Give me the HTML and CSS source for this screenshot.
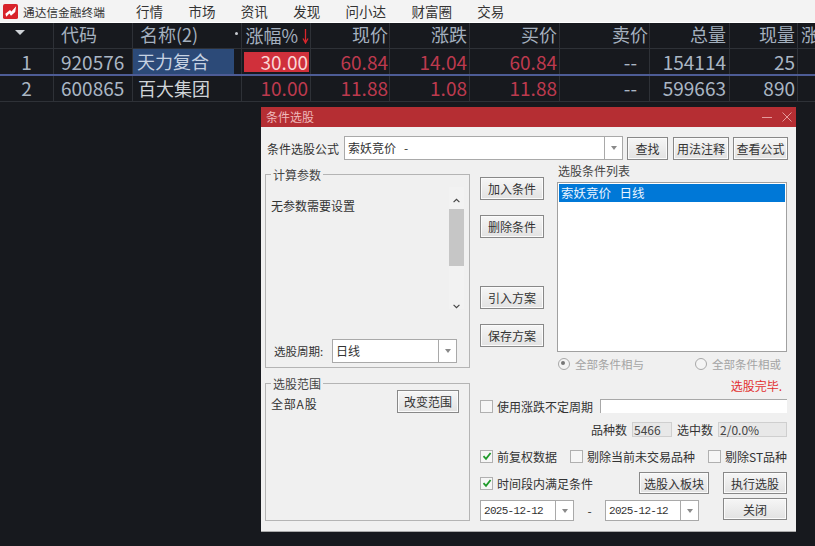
FILE: index.html
```html
<!DOCTYPE html>
<html lang="zh-CN">
<head>
<meta charset="utf-8">
<title>通达信金融终端</title>
<link rel="stylesheet" href="styles.css">
</head>
<body>
<header class="menubar">
  <svg class="logo" viewBox="0 0 16 16" width="15" height="15"><rect width="16" height="16" rx="2" fill="#d8232a"/><path d="M2.5 10.5 L7.5 6.5 L9 8 L14 2.5 L13 8.5 L8.5 12.5 L6.8 10 L3.5 13.5 Z" fill="#fff"/></svg>
  <span class="brand">通达信金融终端</span>
  <nav class="menu"><span>行情</span><span>市场</span><span>资讯</span><span>发现</span><span>问小达</span><span>财富圈</span><span>交易</span></nav>
</header>

<div class="grid">
  <div class="row head">
    <div class="c c0"><i class="sort-tri"></i></div>
    <div class="c c1 left">代码</div>
    <div class="c c2 left name-head"><span>名称(2)</span><i class="dot"></i></div>
    <div class="c c3 pct-head"><span>涨幅%</span><svg class="down" viewBox="0 0 7 16" width="7" height="16"><path d="M3.5 1V14M1 10.5L3.5 15L6 10.5" stroke="#d8262c" stroke-width="1.3" fill="none"/></svg></div>
    <div class="c c4">现价</div>
    <div class="c c5">涨跌</div>
    <div class="c c6">买价</div>
    <div class="c c7">卖价</div>
    <div class="c c8">总量</div>
    <div class="c c9">现量</div>
    <div class="c c10 left">涨</div>
  </div>
  <div class="row active">
    <div class="c c0 center">1</div>
    <div class="c c1 left">920576</div>
    <div class="c c2 left"><span class="sel-name">天力复合</span></div>
    <div class="c c3"><span class="limit">30.00</span></div>
    <div class="c c4 red">60.84</div>
    <div class="c c5 red">14.04</div>
    <div class="c c6 red">60.84</div>
    <div class="c c7 dash">--</div>
    <div class="c c8">154114</div>
    <div class="c c9">25</div>
    <div class="c c10"></div>
  </div>
  <div class="row">
    <div class="c c0 center">2</div>
    <div class="c c1 left">600865</div>
    <div class="c c2 left white">百大集团</div>
    <div class="c c3 red">10.00</div>
    <div class="c c4 red">11.88</div>
    <div class="c c5 red">1.08</div>
    <div class="c c6 red">11.88</div>
    <div class="c c7 dash">--</div>
    <div class="c c8">599663</div>
    <div class="c c9">890</div>
    <div class="c c10"></div>
  </div>
</div>

<section class="dialog">
  <div class="titlebar">
    <span>条件选股</span>
    <svg class="winbtns" viewBox="0 0 30 12" width="30" height="12"><path d="M0 6.5H10" stroke="#e59a9c" stroke-width="1"/><path d="M20.5 1.5L29.5 10.5M29.5 1.5L20.5 10.5" stroke="#e59a9c" stroke-width="1" fill="none"/></svg>
  </div>
  <div class="dlg-body">
    <div class="formula-row">
      <label class="formula-label">条件选股公式</label>
      <div class="combo formula-combo"><span class="combo-text">索妖竞价&nbsp;&nbsp;&nbsp;-</span><span class="combo-arrow"><i></i></span></div>
      <button class="btn b-find">查找</button>
      <button class="btn b-usage">用法注释</button>
      <button class="btn b-view">查看公式</button>
    </div>

    <div class="main">
      <div class="left-col">
        <fieldset class="group params">
          <legend>计算参数</legend>
          <div class="param-area">
            <p class="no-param">无参数需要设置</p>
            <div class="scrollbar">
              <svg viewBox="0 0 9 6" width="9" height="6"><path d="M1 5L4.5 1.5L8 5" stroke="#444" stroke-width="1.4" fill="none"/></svg>
              <div class="track"><div class="thumb"></div></div>
              <svg viewBox="0 0 9 6" width="9" height="6"><path d="M1 1L4.5 4.5L8 1" stroke="#444" stroke-width="1.4" fill="none"/></svg>
            </div>
          </div>
          <div class="period">
            <span class="period-label">选股周期:</span>
            <div class="combo period-combo"><span class="combo-text">日线</span><span class="combo-arrow"><i></i></span></div>
          </div>
        </fieldset>
        <fieldset class="group scope">
          <legend>选股范围</legend>
          <div class="scope-row"><span class="scope-text">全部A股</span><button class="btn b-scope">改变范围</button></div>
        </fieldset>
      </div>

      <div class="right-col">
        <div class="upper">
          <div class="mid-btns">
            <button class="btn b-mid">加入条件</button>
            <button class="btn b-mid">删除条件</button>
            <button class="btn b-mid gap-big">引入方案</button>
            <button class="btn b-mid">保存方案</button>
          </div>
          <div class="list-wrap">
            <div class="list-title">选股条件列表</div>
            <div class="listbox"><div class="list-sel">索妖竞价&nbsp;&nbsp;&nbsp;日线</div></div>
          </div>
        </div>
        <div class="radios">
          <span class="radio on">全部条件相与</span>
          <span class="radio">全部条件相或</span>
        </div>
        <div class="status">选股完毕.</div>
        <div class="line l-vary">
          <span class="chk"></span><span class="chk-text">使用涨跌不定周期</span>
          <span class="vary-input"></span>
        </div>
        <div class="line l-stats">
          <span>品种数</span><span class="stat s1">5466</span>
          <span>选中数</span><span class="stat s2">2/0.0%</span>
        </div>
        <div class="line l-opts">
          <span class="opt o1"><span class="chk checked"><svg viewBox="0 0 10 10" width="10" height="10"><path d="M1.5 5.2L4 7.8L8.6 2" stroke="#1f9a2a" stroke-width="1.8" fill="none"/></svg></span><span class="chk-text">前复权数据</span></span>
          <span class="opt o2"><span class="chk"></span><span class="chk-text">剔除当前未交易品种</span></span>
          <span class="opt o3"><span class="chk"></span><span class="chk-text">剔除ST品种</span></span>
        </div>
        <div class="bottom">
          <div class="bottom-left">
            <div class="line l-time">
              <span class="opt"><span class="chk checked"><svg viewBox="0 0 10 10" width="10" height="10"><path d="M1.5 5.2L4 7.8L8.6 2" stroke="#1f9a2a" stroke-width="1.8" fill="none"/></svg></span><span class="chk-text">时间段内满足条件</span></span>
              <button class="btn b-block">选股入板块</button>
            </div>
            <div class="line l-date">
              <div class="combo date"><span class="combo-text">2025-12-12</span><span class="combo-arrow"><i></i></span></div>
              <span class="sep">-</span>
              <div class="combo date"><span class="combo-text">2025-12-12</span><span class="combo-arrow"><i></i></span></div>
            </div>
          </div>
          <div class="bottom-right">
            <button class="btn b-run">执行选股</button>
            <button class="btn b-run">关闭</button>
          </div>
        </div>
      </div>
    </div>
  </div>
</section>
</body>
</html>
```
FILE: styles.css
```css
* { box-sizing: border-box; }
html, body { margin: 0; height: 100%; }
body {
  position: relative;
  width: 815px;
  height: 546px;
  overflow: hidden;
  background: #17191e;
  font-family: "Noto Sans CJK SC", "Liberation Sans", sans-serif;
}

/* menu bar */
.menubar {
  height: 23px;
  background: #f3f3f3;
  border-bottom: 1px solid #fff;
  display: flex;
  align-items: center;
  padding-left: 3px;
  color: #333;
}
.logo { flex: none; }
.brand { font-size: 11.7px; margin-left: 5px; width: 113px; white-space: nowrap; }
.menu { display: flex; font-size: 13.5px; white-space: nowrap; }
.menu span { margin-right: 25.4px; }

/* quote grid */
.grid { color: #aab6c4; font-size: 19px; }
.row {
  display: flex;
  height: 26px;
  border-bottom: 1px solid #2e3137;
}
.row.head { height: 26px; color: #a4b0be; font-size: 18px; }
.row.active { border-bottom: 2px solid #4d5c96; height: 27px; }
.c {
  flex: none;
  height: 100%;
  border-right: 1px solid #2e3137;
  padding: 0 2px;
  text-align: right;
  line-height: 24px;
  white-space: nowrap;
}
.head .c { line-height: 23px; }
.active .c { line-height: 26px; }
.c.left { text-align: left; padding-left: 7px; }
.c.center { text-align: center; padding: 0; }
.c0 { width: 54px; position: relative; }
.c1 { width: 79px; }
.c2 { width: 109px; }
.c3 { width: 69px; }
.c4 { width: 79px; padding-right: 1px; }
.c5 { width: 80px; padding-right: 2px; }
.c6 { width: 90px; padding-right: 2px; }
.c7 { width: 90px; padding-right: 1px; }
.c8 { width: 80px; padding-right: 3px; }
.c9 { width: 68px; padding-right: 2px; }
.c10 { width: 17px; border-right: 0; }
.c.left.c10 { padding-left: 3px; }
.c7.dash { padding-right: 12px; }
.red { color: #bd3a4e; }
.c.white { color: #d0d4d8; font-size: 18px; padding-left: 5px; }
.sort-tri {
  position: absolute; left: 15px; top: 7px;
  border: 5px solid transparent; border-top: 5px solid #cfd3d8; border-bottom: 0;
}
.name-head { position: relative; }
.dot { position: absolute; right: 3px; top: 9px; width: 3px; height: 3px; background: #c8ccd2; border-radius: 50%; }
.pct-head { display: flex; align-items: center; justify-content: flex-end; padding-right: 1px; gap: 4px; }
.active .c2 .sel-name {
  display: block; margin: 0 5px 0 -7px; padding-left: 4px;
  height: 25px; background: #2c4a78; color: #c6d2e2; font-size: 18px; line-height: 24px;
}
.active .limit {
  display: block; height: 20px; margin: 3px -1px 0 0; padding-right: 1px;
  background: #d0303b; color: #fbd6d6; line-height: 20px;
}

/* dialog */
.dialog {
  position: absolute;
  left: 261px; top: 107px;
  width: 535px; height: 425px;
  background: #f0f0f0;
  color: #333;
  font-size: 12px;
  border-bottom: 1px solid #aaa;
}
.titlebar {
  height: 20px;
  background: #b52e33;
  color: #eeb9ba;
  padding: 0 4px 0 5px;
  display: flex;
  justify-content: space-between;
  align-items: center;
  line-height: 20px;
}
.dlg-body { padding: 9px 0 0 4px; }
.formula-row { display: flex; align-items: center; height: 24px; }
.formula-label { width: 79px; padding-left: 2px; }
.combo {
  display: flex;
  height: 24px;
  background: #fff;
  border: 1px solid #a9a9a9;
  align-items: center;
}
.combo-text { flex: 1; padding-left: 3px; white-space: nowrap; overflow: hidden; line-height: 18px; }
.combo-arrow {
  flex: none; width: 18px; height: 100%;
  border-left: 1px solid #a9a9a9;
  display: flex; align-items: center; justify-content: center;
}
.combo-arrow i { border: 3.5px solid transparent; border-top: 4px solid #8a8a8a; border-bottom: 0; }
.formula-combo { width: 279px; }
.btn {
  font: inherit;
  color: #333;
  padding: 0;
  border: 1px solid #888;
  background: linear-gradient(#f6f6f6, #e2e2e2);
  box-shadow: inset 0 0 0 1px #fbfbfb;
  height: 23px;
  white-space: nowrap;
}
.b-find { width: 41px; margin-left: 4px; }
.b-usage { width: 56px; margin-left: 5px; }
.b-view { width: 55px; margin-left: 4px; }

.main { display: flex; margin-top: 7px; }
.left-col { width: 205px; flex: none; }
.group {
  margin: 0;
  padding: 0;
  border: 1px solid #b4b4b4;
  min-width: 0;
  position: relative;
}
.group legend { padding: 0 2px; margin-left: 5px; line-height: 14px; color: #444; position: relative; top: 1px; }
.params { height: 201px; display: flex; flex-direction: column; margin-top: 0; }
.param-area { display: flex; height: 138px; padding: 6px 0 0 5px; justify-content: space-between; }
.no-param { margin: 10px 0 0; }
.scrollbar {
  width: 15px; margin-right: 5px;
  display: flex; flex-direction: column; align-items: center;
  padding-top: 11px; height: 122px; background: #f2f2f2;
}
.track { width: 15px; height: 95px; margin-top: 6px; flex: none; }
.thumb { height: 57px; background: #c6c6c6; }
.period { display: flex; align-items: center; margin-top: 20px; padding-left: 8px; height: 24px; }
.period-label { width: 58px; white-space: nowrap; font-size: 11.5px; }
.period-combo { width: 125px; }
.scope { margin-top: 8px; height: 145px; }
.scope-row { display: flex; justify-content: space-between; align-items: flex-start; padding: 0 10px 0 5px; }
.scope-text { padding-top: 5px; letter-spacing: .8px; }
.b-scope { width: 62px; }

.right-col { width: 311px; margin-left: 10px; flex: none; }
.upper { display: flex; height: 184px; }
.mid-btns { width: 64px; flex: none; display: flex; flex-direction: column; padding-top: 10px; }
.b-mid { width: 64px; flex: none; margin-bottom: 15px; }
.gap-big { margin-top: 33px; }
.list-wrap { margin-left: 13px; width: 230px; }
.list-title { height: 16px; line-height: 9px; padding-left: 1px; margin-top: -1px; color: #444; }
.listbox { height: 170px; background: #fff; border: 1px solid #a0a0a0; padding: 1px; }
.list-sel { background: #0078d7; color: #eaf4ff; height: 18px; line-height: 18px; padding-left: 2px; font-size: 12.5px; }

.radios { display: flex; height: 16px; margin-top: 4px; padding-left: 78px; color: #a4a4a4; font-size: 11.5px; line-height: 18px; }
.radio { position: relative; padding-left: 17px; width: 137px; flex: none; white-space: nowrap; }
.radio::before {
  content: ""; position: absolute; left: 0; top: 3px; width: 10px; height: 10px;
  border: 1px solid #a8a8a8; border-radius: 50%; background: #f4f4f4;
}
.radio.on::after {
  content: ""; position: absolute; left: 3px; top: 6px; width: 4px; height: 4px;
  background: #777; border-radius: 50%;
}
.status { color: #e23030; text-align: right; padding-right: 9px; height: 19px; line-height: 19px; margin-top: 5px; }
.line { display: flex; align-items: center; white-space: nowrap; }
.chk {
  flex: none; width: 13px; height: 13px;
  border: 1px solid #b0b0b0; background: #f6f6f6;
  display: inline-flex; align-items: center; justify-content: center;
}
.chk-text { margin-left: 4px; }
.l-vary { height: 14px; margin-top: 4px; }
.vary-input { width: 187px; height: 14px; margin-left: 7px; background: #fff; border-top: 1px solid #a8a8a8; border-left: 1px solid #a8a8a8; }
.l-stats { height: 16px; margin-top: 8px; padding-left: 111px; }
.stat { height: 15px; line-height: 14px; background: #e8e8e8; border: 1px solid #cfcfcf; padding-left: 1px; color: #444; }
.s1 { width: 40px; margin: 0 5px; }
.s2 { width: 69px; margin-left: 5px; }
.l-opts { height: 14px; margin-top: 12px; }
.opt { display: flex; align-items: center; }
.o1 { width: 90px; }
.o2 { width: 138px; }
.bottom { display: flex; margin-top: 9px; }
.bottom-left { width: 243px; flex: none; }
.l-time { height: 22px; justify-content: space-between; padding-right: 14px; }
.b-block { width: 70px; height: 22px; }
.l-date { margin-top: 6px; }
.date { width: 94px; height: 21px; }
.date .combo-text { font-size: 11px; font-family: "Liberation Mono", "DejaVu Sans Mono", monospace; letter-spacing: -.7px; }
.sep { width: 31px; text-align: center; }
.bottom-right { display: flex; flex-direction: column; gap: 4px; }
.b-run { width: 64px; height: 22px; }
```
